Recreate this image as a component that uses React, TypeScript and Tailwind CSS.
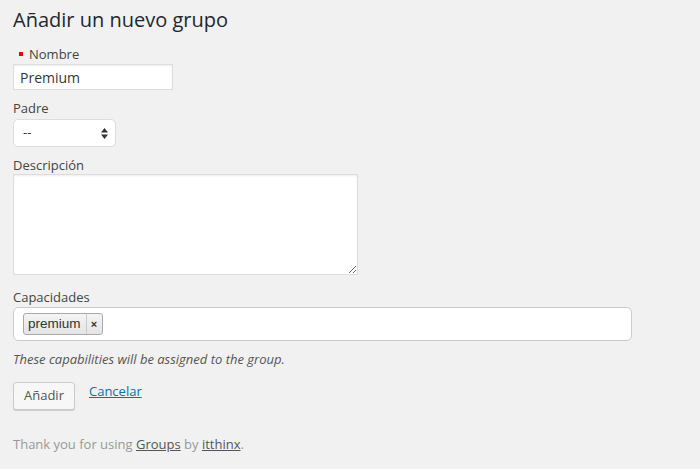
import React from 'react'

const font = "font-['Open_Sans',sans-serif]"

export default function App() {
  return (
    <div className={`min-h-[469px] w-[700px] bg-[#f1f1f1] px-[13px] pt-[7px] text-[13px] text-[#444] ${font}`}>
      <h1 className="text-[20px] leading-[26px] text-[#23282d]">Añadir un nuevo grupo</h1>

      {/* Nombre */}
      <div className="mt-[13px] flex items-center leading-[16px]">
        <span className="ml-[6px] mr-[6px] inline-block h-[4px] w-[4px] bg-[#ee0000]" />
        <span>Nombre</span>
      </div>
      <input
        defaultValue="Premium"
        className="mt-[2px] block h-[26px] w-[160px] border border-[#ddd] bg-white px-[6px] text-[14px] text-[#32373c] outline-none shadow-[inset_0_1px_2px_rgba(0,0,0,0.07)]"
      />

      {/* Padre */}
      <div className="mt-[10px] leading-[16px]">Padre</div>
      <div className="relative mt-[3px] flex h-[28px] w-[103px] items-center rounded-[5px] border border-[#ddd] bg-white pl-[9px] text-[#32373c]">
        <span>--</span>
        <svg className="absolute right-[7px] top-[8px]" width="7" height="11" viewBox="0 0 7 11">
          <path d="M3.5 0L7 4.5H0z" fill="#333" />
          <path d="M3.5 11L0 6.5h7z" fill="#333" />
        </svg>
      </div>

      {/* Descripción */}
      <div className="mt-[10px] leading-[16px]">Descripción</div>
      <textarea className="mt-[1px] block h-[101px] w-[345px] resize border border-[#ddd] bg-white outline-none shadow-[inset_0_1px_2px_rgba(0,0,0,0.07)]" />

      {/* Capacidades */}
      <div className="mt-[14px] leading-[16px]">Capacidades</div>
      <div className="mt-[2px] flex h-[34px] w-[619px] items-center rounded-[5px] border border-[#ccc] bg-white px-[9px]">
        <div className="flex h-[22px] items-stretch rounded-[3px] border border-[#aaa] bg-[linear-gradient(#f4f4f4,#e4e4e4)] font-['Liberation_Sans',sans-serif] text-[13.5px] text-[#333]">
          <span className="flex items-center pl-[4px] pr-[5px]">premium</span>
          <span className="flex w-[16px] items-center justify-center border-l border-[#ccc] text-[11px] font-bold">×</span>
        </div>
      </div>
      <p className="mt-[10px] text-[13px] italic leading-[16px] text-[#555]">These capabilities will be assigned to the group.</p>

      {/* Actions */}
      <div className="mt-[15px] flex items-start">
        <button className="h-[28px] rounded-[3px] border border-[#ccc] bg-[#f7f7f7] px-[10px] text-[13px] text-[#555] shadow-[0_1px_0_#ccc]">
          Añadir
        </button>
        <a href="#" className="ml-[14px] text-[#0073aa] underline">Cancelar</a>
      </div>

      <p className="mt-[25px] text-[13px] text-[#999]">
        Thank you for using <a href="#" className="text-[#555] underline">Groups</a> by{' '}
        <a href="#" className="text-[#555] underline">itthinx</a>.
      </p>
    </div>
  )
}
